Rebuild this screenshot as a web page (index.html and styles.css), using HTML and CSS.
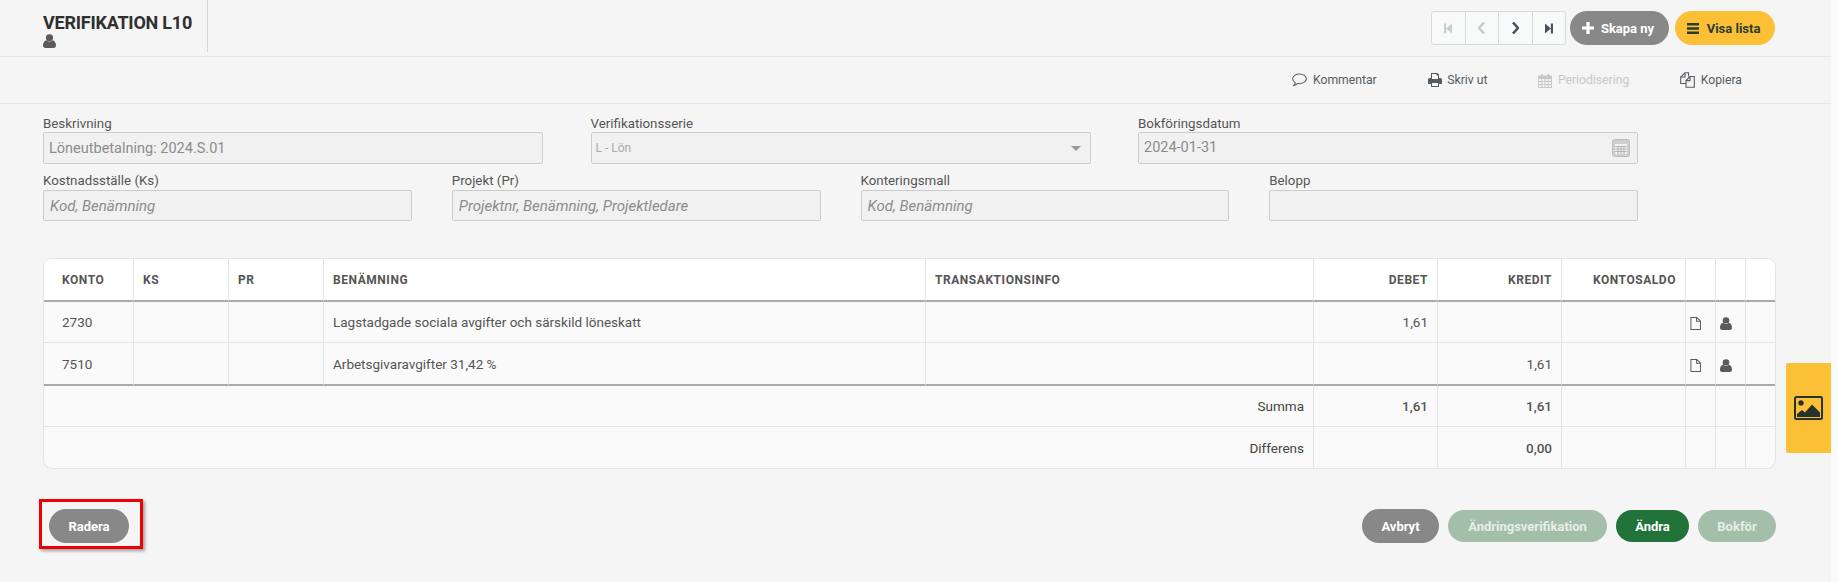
FILE: index.html
```html
<!DOCTYPE html>
<html lang="sv">
<head>
<meta charset="utf-8">
<title>Verifikation L10</title>
<link rel="stylesheet" href="styles.css">
</head>
<body>
<svg class="defs" width="0" height="0" aria-hidden="true">
  <symbol id="user" viewBox="0 0 14 16" preserveAspectRatio="none"><circle cx="7" cy="4.2" r="3.9"/><path d="M0 13.2C0 9.8 1.6 7.6 3.6 7.2 4.6 8.2 5.7 8.7 7 8.7s2.4-.5 3.400-1.500c2 .4 3.600 2.600 3.600 6 0 1.700-1.100 2.800-2.600 2.800H2.600C1.100 16 0 14.900 0 13.200z"/></symbol>
  <symbol id="file" viewBox="0 0 12 15" preserveAspectRatio="none"><path d="M1 .6h6.400L11.400 4.600V14.400H1zM7.200.8V4.800H11.200" fill="none" stroke="currentColor" stroke-width="1.100"/></symbol>
</svg>
<div class="page">
  <main class="main">
    <header class="topbar">
      <div class="title-block">
        <h1 class="title">VERIFIKATION L10</h1>
        <svg class="icon-user"><use href="#user"/></svg>
      </div>
      <div class="top-actions">
        <div class="pager">
          <span class="pager-cell dim"><svg width="8" height="11" viewBox="0 0 9 11"><path d="M0 0h2.400v11H0zM2.400 5.500L9 0v11z"/></svg></span>
          <span class="pager-cell dim"><svg width="8" height="12" viewBox="0 0 8 12"><path d="M6 .5L1 6l5 5.500" fill="none" stroke="currentColor" stroke-width="2.600"/></svg></span>
          <span class="pager-cell"><svg width="8" height="12" viewBox="0 0 8 12"><path d="M2 .5L7 6l-5 5.500" fill="none" stroke="currentColor" stroke-width="2.600"/></svg></span>
          <span class="pager-cell"><svg width="8" height="11" viewBox="0 0 9 11"><path d="M9 0H6.600v11H9zM6.600 5.500L0 0v11z"/></svg></span>
        </div>
        <button class="btn btn-grey btn-icon" type="button"><svg width="12" height="12" viewBox="0 0 12 12"><path d="M4.400 0h3.200v4.400H12v3.200H7.600V12H4.400V7.600H0V4.400h4.400z" fill="currentColor"/></svg>Skapa ny</button>
        <button class="btn btn-yellow btn-icon" type="button"><svg width="12" height="11" viewBox="0 0 12 11"><path d="M0 0h12v2.600H0zM0 4.200h12v2.600H0zM0 8.400h12V11H0z" fill="currentColor"/></svg>Visa lista</button>
      </div>
    </header>

    <nav class="toolbar">
      <a class="tool"><svg width="15" height="14" viewBox="0 0 16 15" preserveAspectRatio="none"><path d="M8 1C4 1 .7 3.200.7 6.200c0 1.700 1.100 3.200 2.800 4.200-.2 1.100-.8 2-1.500 3 1.500-.3 3-1.100 4.100-2.200.6.100 1.200.1 1.900.1 4 0 7.300-2.200 7.300-5.100S12 1 8 1z" fill="none" stroke="currentColor" stroke-width="1.100"/></svg>Kommentar</a>
      <a class="tool"><svg width="14" height="14" viewBox="0 0 14 14"><path d="M3 0h6.500L11 1.500V5h1.200c1 0 1.800.8 1.800 1.800V11h-3v3H3v-3H0V6.800C0 5.800.8 5 1.800 5H3zM4 1v5h6V2.500H8.500V1zM4 10v3h6v-3z" fill-rule="evenodd"/></svg>Skriv ut</a>
      <a class="tool tool-off"><svg width="14" height="15" viewBox="0 0 15 15" preserveAspectRatio="none"><path d="M1 2.500h2V1h2v1.500h5V1h2v1.500h2c.6 0 1 .4 1 1V14c0 .6-.4 1-1 1H1c-.6 0-1-.4-1-1V3.500c0-.6.4-1 1-1zM1 6v2h2.500V6zm3.500 0v2h2.500V6zM8 6v2h2.500V6zm3.500 0v2H14V6zM1 9v2h2.500V9zm3.500 0v2h2.500V9zM8 9v2h2.500V9zm3.500 0v2H14V9zM1 12v2h2.500v-2zm3.500 0v2h2.500v-2zM8 12v2h2.500v-2zm3.500 0v2H14v-2z" fill-rule="evenodd"/></svg>Periodisering</a>
      <a class="tool"><svg width="15" height="16" viewBox="0 0 15 16"><path d="M5.500 11.500H.7V5L5 .7H8.500V4.500M5 .9V5H.9M6 15.300V8.500L10 4.500H14.300V15.300zM10 4.700V8.600H6.200" fill="none" stroke="currentColor" stroke-width="1.100"/></svg>Kopiera</a>
    </nav>

    <section class="form">
      <div class="row row-3">
        <div class="field"><label class="label">Beskrivning</label><input class="input" disabled value="Löneutbetalning: 2024.S.01"></div>
        <div class="field"><label class="label">Verifikationsserie</label><div class="input select">L - Lön<span class="caret"></span></div></div>
        <div class="field"><label class="label">Bokföringsdatum</label><div class="input date">2024-01-31<svg width="18" height="18" viewBox="0 0 18 18"><rect x=".5" y=".5" width="17" height="17" rx="2" fill="#cfcfcf" stroke="#bdbdbd"/><path d="M3 5h12v10H3z" fill="#f1f1f1"/><path d="M3 7.500h12M3 10h12M3 12.500h12M6 7.500V15M9 7.500V15M12 7.500V15" stroke="#a9a9a9" stroke-width=".8"/></svg></div></div>
      </div>
      <div class="row row-4">
        <div class="field"><label class="label">Kostnadsställe (Ks)</label><input class="input low" disabled placeholder="Kod, Benämning"></div>
        <div class="field"><label class="label">Projekt (Pr)</label><input class="input low" disabled placeholder="Projektnr, Benämning, Projektledare"></div>
        <div class="field"><label class="label">Konteringsmall</label><input class="input low" disabled placeholder="Kod, Benämning"></div>
        <div class="field"><label class="label">Belopp</label><input class="input low" disabled></div>
      </div>
    </section>

    <div class="card">
      <table class="grid">
        <colgroup>
          <col class="c-konto"><col class="c-ks"><col class="c-ks"><col class="c-ben"><col class="c-info"><col class="c-num"><col class="c-num"><col class="c-num"><col class="c-ic"><col class="c-ic"><col class="c-ic">
        </colgroup>
        <thead>
          <tr><th class="first">KONTO</th><th>KS</th><th>PR</th><th>BENÄMNING</th><th>TRANSAKTIONSINFO</th><th class="r">DEBET</th><th class="r">KREDIT</th><th class="r">KONTOSALDO</th><th></th><th></th><th></th></tr>
        </thead>
        <tbody>
          <tr><td class="first">2730</td><td></td><td></td><td>Lagstadgade sociala avgifter och särskild löneskatt</td><td></td><td class="r">1,61</td><td></td><td></td><td class="ic"><svg class="icon-file"><use href="#file"/></svg></td><td class="ic"><svg class="icon-user"><use href="#user"/></svg></td><td></td></tr>
          <tr><td class="first">7510</td><td></td><td></td><td>Arbetsgivaravgifter 31,42 %</td><td></td><td></td><td class="r">1,61</td><td></td><td class="ic"><svg class="icon-file"><use href="#file"/></svg></td><td class="ic"><svg class="icon-user"><use href="#user"/></svg></td><td></td></tr>
        </tbody>
        <tfoot>
          <tr><td class="r sum-label" colspan="5">Summa</td><td class="r strong">1,61</td><td class="r strong">1,61</td><td></td><td></td><td></td><td></td></tr>
          <tr><td class="r sum-label" colspan="5">Differens</td><td></td><td class="r strong">0,00</td><td></td><td></td><td></td><td></td></tr>
        </tfoot>
      </table>
    </div>

    <footer class="footer">
      <div class="marked"><button class="btn btn-grey btn-tall btn-delete" type="button">Radera</button></div>
      <div class="footer-actions">
        <button class="btn btn-grey btn-tall btn-cancel" type="button">Avbryt</button>
        <button class="btn btn-pale btn-change" type="button">Ändringsverifikation</button>
        <button class="btn btn-green btn-edit" type="button">Ändra</button>
        <button class="btn btn-pale btn-book" type="button">Bokför</button>
      </div>
    </footer>

    <aside class="side-tab"><svg width="29" height="24" viewBox="0 0 29 24"><rect x="1" y="1" width="27" height="22" rx="1.500" fill="none" stroke="currentColor" stroke-width="2"/><circle cx="7" cy="7" r="2.700" fill="currentColor"/><path d="M3 21v-3l5-4 3 2.500 7-8 8 8V21z" fill="currentColor"/></svg></aside>
  </main>
  <div class="scroll-strip"></div>
</div>
</body>
</html>
```

FILE: styles.css
```css
* { box-sizing: border-box; }
html, body { margin: 0; height: 100%; }
body {
  background: #f5f5f5;
  color: #555;
  font-family: Roboto, "Liberation Sans", sans-serif;
  font-size: 13px;
  overflow: hidden;
}
.defs { position: absolute; }
.page { display: flex; height: 582px; }
.main { flex: 1; position: relative; min-width: 0; }
.scroll-strip { width: 7px; background: #f9f9f9; }

.topbar {
  display: flex;
  justify-content: space-between;
  height: 57px;
  padding: 0 56px 0 43px;
  border-bottom: 1px solid #e6e6e6;
}
.title-block {
  width: 165px;
  height: 52px;
  padding-top: 13px;
  border-right: 1px solid #d5d5d5;
}
.title {
  margin: 0;
  font-size: 18px;
  line-height: 19px;
  font-weight: 700;
  letter-spacing: -.23px;
  color: #2f2f2f;
}
.icon-user { display: block; width: 13px; height: 14px; fill: #5f5a5a; }
.title-block .icon-user { margin-top: 2px; }

.top-actions { display: flex; gap: 4px; padding-top: 11px; align-items: flex-start; }
.pager {
  display: flex;
  width: 135px;
  height: 34px;
  border: 1px solid #d9d9d9;
  border-radius: 3px;
  background: #f8f9f9;
}
.pager-cell {
  flex: 1;
  display: flex;
  align-items: center;
  justify-content: center;
  border-right: 1px solid #d9d9d9;
  color: #4a5058;
  fill: #4a5058;
}
.pager-cell:last-child { border-right: 0; }
.pager-cell.dim { color: #c2cfcb; fill: #c2cfcb; }

.btn {
  border: 0;
  height: 32px;
  padding: 0;
  border-radius: 17px;
  font-family: Roboto, "Liberation Sans", sans-serif;
  font-size: 13px;
  font-weight: 700;
  color: #fff;
  display: inline-flex;
  align-items: center;
  justify-content: center;
}
.btn-tall { height: 34px; }
.btn-icon { height: 34px; gap: 7px; padding-right: 3px; }
.btn-grey { background: #888; }
.btn-yellow { background: #fbc036; color: #2d3a30; width: 100px; margin-left: 2px; gap: 8px; }
.top-actions .btn-grey { width: 99px; }
.btn-pale { background: #a3bfa9; color: #e6eee7; }
.btn-green { background: #22733a; }
.btn-delete { width: 80px; }
.btn-cancel { width: 77px; }
.btn-change { width: 159px; }
.btn-edit { width: 73px; }
.btn-book { width: 78px; }

.toolbar {
  display: flex;
  justify-content: flex-end;
  align-items: center;
  gap: 51px;
  height: 47px;
  padding-right: 89px;
  border-bottom: 1px solid #e6e6e6;
  font-size: 12.2px;
}
.tool {
  display: flex;
  align-items: center;
  gap: 5.5px;
  color: #555b60;
  fill: #555b60;
}
.tool-off { color: #c8c8c8; fill: #c8c8c8; }

.form { width: 1595px; margin-left: 43px; padding-top: 12px; }
.row { display: grid; }
.row-3 { grid-template-columns: repeat(3, 1fr); column-gap: 47.5px; }
.row-4 { grid-template-columns: repeat(4, 1fr); column-gap: 40px; margin-top: 9px; }
.label { display: block; height: 16px; line-height: 16px; font-size: 13.33px; color: #555; }
.row-4 .label { height: 17px; }
.input {
  display: block;
  width: 100%;
  height: 32px;
  padding: 0 5px;
  border: 1px solid #ccc;
  border-radius: 2px;
  background: #f1f1f1;
  font-family: Roboto, "Liberation Sans", sans-serif;
  font-size: 14.5px;
  line-height: 30px;
  color: #8c8c8c;
  outline: 0;
}
.input.low { height: 31px; padding: 0 6px; font-size: 15px; }
.input::placeholder { color: #8c8c8c; font-style: italic; opacity: 1; }
.input:disabled { color: #8c8c8c; opacity: 1; }
.select { font-size: 12px; color: #ababab; display: flex; justify-content: space-between; align-items: center; padding: 0 9px 0 4px; }
.caret { border: 5.500px solid transparent; border-top: 5px solid #999; border-bottom: 0; }
.date { display: flex; justify-content: space-between; align-items: center; padding-right: 7px; }

.card {
  margin: 37px 55px 0 43px;
  height: 211px;
  border: 1px solid #e4e4e4;
  border-radius: 9px;
  overflow: hidden;
  background: #fafafa;
}
.grid { width: 100%; table-layout: fixed; border-collapse: separate; border-spacing: 0; font-size: 13.5px; color: #555; }
.c-konto { width: 90px; }
.c-ks { width: 95px; }
.c-ben { width: 602px; }
.c-info { width: 388px; }
.c-num { width: 124px; }
.c-ic { width: 30px; }
.grid th, .grid td {
  padding: 0 9px;
  border-right: 1px solid #e4e4e4;
  text-align: left;
  white-space: nowrap;
}
.grid th:last-child, .grid td:last-child { border-right: 0; }
.grid th {
  height: 43px;
  background: #fff;
  border-bottom: 2px solid #aaa;
  font-size: 12px;
  font-weight: 700;
  letter-spacing: .55px;
  color: #555;
}
.grid tbody td { height: 41px; border-bottom: 1px solid #e4e4e4; }
.grid tbody tr:last-child td { height: 43px; border-bottom: 2px solid #aaa; }
.grid tfoot td { height: 41px; border-bottom: 1px solid #e4e4e4; }
.grid tfoot tr:last-child td { border-bottom: 0; }
.grid .first { padding-left: 18px; }
.grid .r { text-align: right; }
.grid .strong { font-weight: 500; }
.grid .sum-label { color: #444; }
.grid .ic { padding: 3px 0 0 4px; }
.grid .icon-user { width: 12px; height: 13px; }
.icon-file { display: block; width: 11px; height: 13px; color: #5c5a63; }

.footer { display: flex; justify-content: space-between; align-items: center; margin: 40px 55px 0 49px; }
.marked { position: relative; display: flex; }
.marked::after {
  content: "";
  position: absolute;
  inset: -10px -14px -6px -10px;
  border: 3px solid #f00000;
  box-shadow: 2px 2px 3px rgba(0, 0, 0, .35);
}
.footer-actions { display: flex; align-items: center; gap: 9px; }

.side-tab {
  position: absolute;
  top: 363px;
  right: 0;
  width: 45px;
  height: 90px;
  background: #fbc036;
  border-radius: 2px 0 0 2px;
  color: #26332b;
  display: flex;
  align-items: center;
  justify-content: center;
}
```
